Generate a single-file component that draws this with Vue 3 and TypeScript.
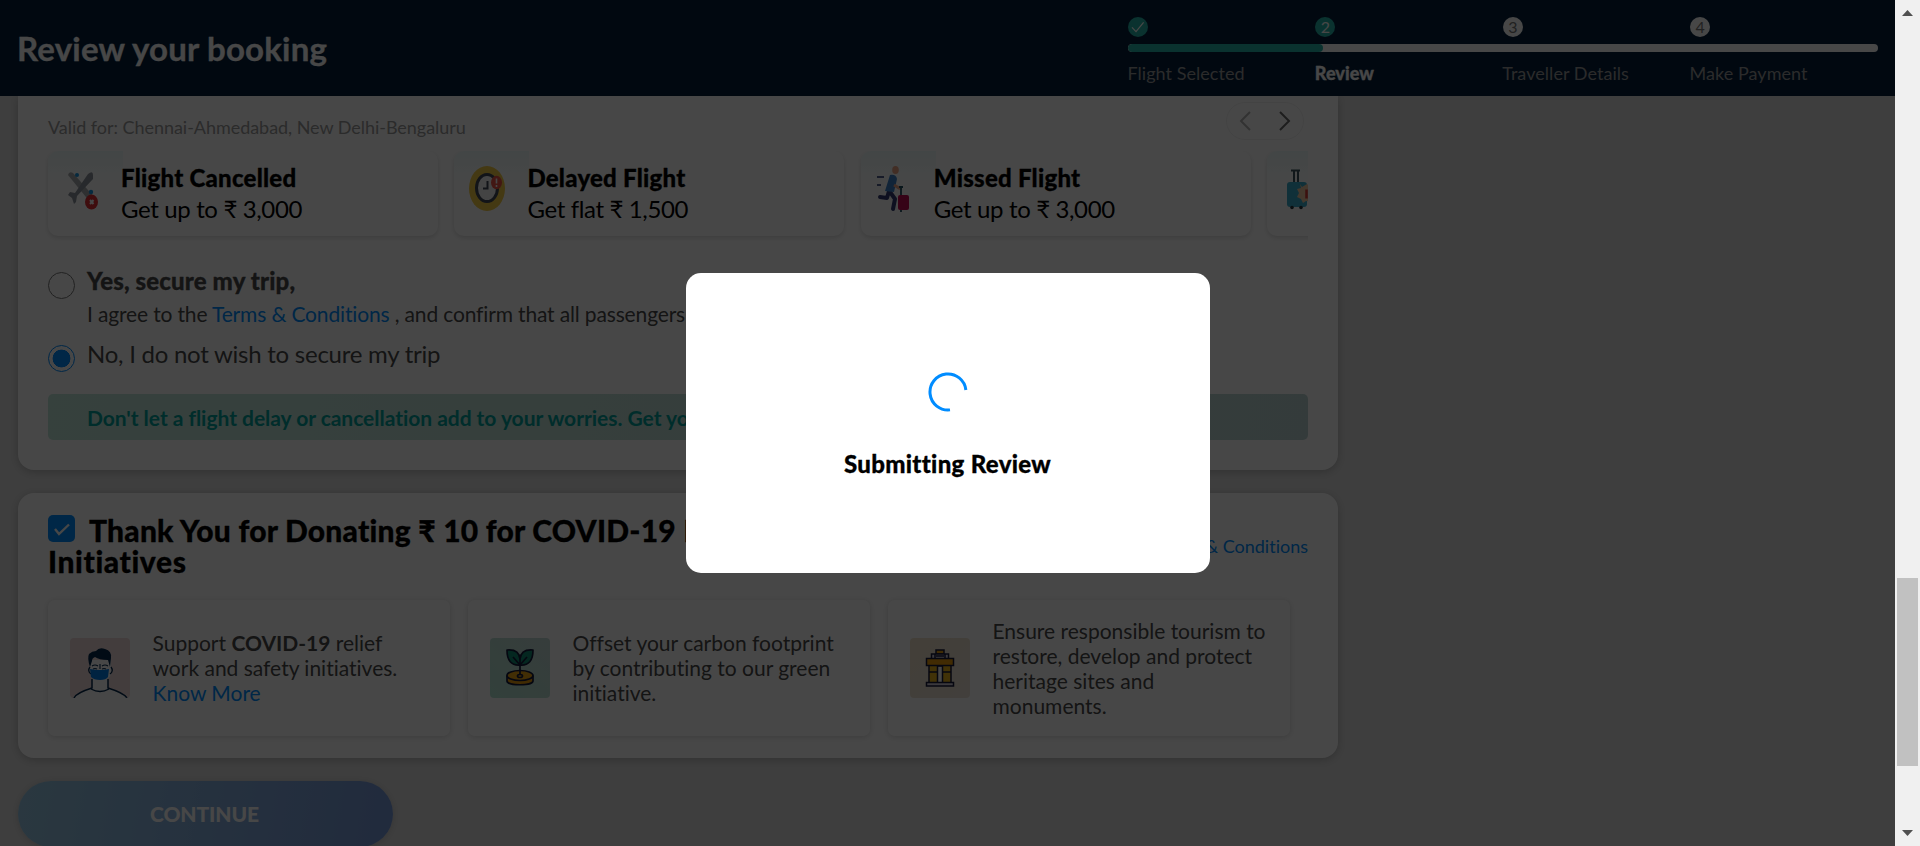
<script setup lang="ts">
interface Step { n: number; label: string; state: 'done' | 'active' | 'todo' }
interface Cover { kind: string; title: string; text: string }

const steps: Step[] = [
  { n: 1, label: 'Flight Selected', state: 'done' },
  { n: 2, label: 'Review', state: 'active' },
  { n: 3, label: 'Traveller Details', state: 'todo' },
  { n: 4, label: 'Make Payment', state: 'todo' },
]

const covers: Cover[] = [
  { kind: 'plane', title: 'Flight Cancelled', text: 'Get up to ₹ 3,000' },
  { kind: 'clock', title: 'Delayed Flight', text: 'Get flat ₹ 1,500' },
  { kind: 'runner', title: 'Missed Flight', text: 'Get up to ₹ 3,000' },
  { kind: 'bag', title: '', text: '' },
]
</script>

<template>
  <div class="screen">
    <div class="page">
      <header class="header">
        <h1>Review your booking</h1>
        <div class="stepper">
          <div class="row">
            <div v-for="s in steps" :key="s.n" class="cell">
              <span class="dot" :class="s.state">
                <svg v-if="s.state === 'done'" width="20" height="20" viewBox="0 0 20 20"><path d="M4 10.4 8 14.6 15.6 5.4" fill="none" stroke="#fff" stroke-width="1.2" /></svg>
                <template v-else>{{ s.n }}</template>
              </span>
            </div>
          </div>
          <div class="track"><div class="fill"></div></div>
          <div class="row labels">
            <div v-for="s in steps" :key="s.n" class="cell" :class="{ current: s.state === 'active' }">{{ s.label }}</div>
          </div>
        </div>
      </header>

      <main>
        <section class="card insurance">
          <div class="valid">
            <span>Valid for: Chennai-Ahmedabad, New Delhi-Bengaluru</span>
            <div class="nav">
              <svg width="12" height="20" viewBox="0 0 12 20"><path d="M11 1 2 10l9 9" fill="none" stroke="#b4b4b4" stroke-width="2" /></svg>
              <svg width="12" height="20" viewBox="0 0 12 20"><path d="M1 1l9 9-9 9" fill="none" stroke="#6a6a6a" stroke-width="2" /></svg>
            </div>
          </div>

          <div class="covers">
            <article v-for="c in covers" :key="c.kind" class="cover">
              <div class="art">
                <svg v-if="c.kind === 'plane'" width="75" height="75" viewBox="0 0 75 75">
                  <path d="M20 24q1-4 5-2l22 25-5 4z" fill="#a9adb0" />
                  <circle cx="29" cy="24" r="2" fill="#1696e0" /><circle cx="43" cy="41" r="2.2" fill="#1696e0" />
                  <path d="M40 23q5-4 5 1v4L29 45l-1 6-2 2-2-6-4-3 2-3 5 1z" fill="#8e959d" />
                  <ellipse cx="43.500" cy="51" rx="6.500" ry="7.500" fill="#e02f33" />
                  <path d="m42 49 3.500 4m0-4L42 53" stroke="#fff" stroke-width="2" />
                </svg>
                <svg v-else-if="c.kind === 'clock'" width="75" height="75" viewBox="0 0 75 75">
                  <ellipse cx="33" cy="37.500" rx="18" ry="22.500" fill="#f3cb45" />
                  <ellipse cx="33" cy="37" rx="10.500" ry="13.500" fill="#f4f4f4" stroke="#414956" stroke-width="3" />
                  <path d="M33.500 30v7.500H29" fill="none" stroke="#414956" stroke-width="2" />
                  <ellipse cx="42.500" cy="31.500" rx="5.500" ry="6.800" fill="#ee5546" />
                  <path d="M42.500 27.500v5m0 1.500v2" stroke="#fff" stroke-width="1.600" />
                </svg>
                <svg v-else-if="c.kind === 'runner'" width="75" height="75" viewBox="0 0 75 75">
                  <path d="M16 26h7m-7 8h4" stroke="#53608f" stroke-width="2" />
                  <path d="M28 40 26 47l-7-1M29 41l5 7-2 10" fill="none" stroke="#353c72" stroke-width="4" stroke-linecap="round" stroke-linejoin="round" />
                  <path d="M29 24q6-1 7 4l-3 13-9-1z" fill="#3d83c9" />
                  <path d="m33 34 5 3 3 .5" fill="none" stroke="#eba586" stroke-width="3" />
                  <ellipse cx="34.500" cy="19" rx="3.300" ry="4" fill="#eba586" />
                  <path d="M38 36h4M40 36v9M40 59v2" stroke="#235162" stroke-width="1.800" />
                  <rect x="37" y="44" width="11" height="15" rx="2" fill="#c30b55" />
                </svg>
                <svg v-else width="75" height="75" viewBox="0 0 75 75">
                  <path d="M24 19.500h9M27 19v13m4-13v13" stroke="#39545f" stroke-width="2" />
                  <rect x="20" y="31" width="20" height="25" rx="3" fill="#3badcb" />
                  <circle cx="25" cy="56.500" r="1.800" fill="#26343b" /><circle cx="34" cy="56.500" r="1.800" fill="#26343b" />
                  <path d="m33 33 2 3 5-3 5 4v14l-6-1-3 2-2-4-4-2 2-4-2-4 4-1z" fill="#f0c8a0" />
                  <path d="M39.500 38.500v9" stroke="#d63a36" stroke-width="2.500" />
                </svg>
              </div>
              <div v-if="c.title" class="cover-copy"><b>{{ c.title }}</b><span>{{ c.text }}</span></div>
            </article>
          </div>

          <div class="option yes">
            <i class="radio"></i>
            <div>
              <p class="strong">Yes, secure my trip,</p>
              <p class="small">I agree to the <a>Terms &amp; Conditions</a> , and confirm that all passengers</p>
            </div>
          </div>
          <div class="option">
            <i class="radio on"></i>
            <p class="decline">No, I do not wish to secure my trip</p>
          </div>
          <div class="notice">Don't let a flight delay or cancellation add to your worries. Get your</div>
        </section>

        <section class="card donate">
          <div class="donate-head">
            <h2><span class="check"><svg width="27" height="27" viewBox="0 0 27 27"><path d="m7 14 4 5 10-9.500" fill="none" stroke="#fff" stroke-width="2.400" /></svg></span>Thank You for Donating ₹ 10 for COVID-19 Relief &amp; <span class="wide">Initiatives</span></h2>
            <a>Terms &amp; Conditions</a>
          </div>
          <div class="causes">
            <article class="cause">
              <div class="pic pink">
                <svg width="60" height="60" viewBox="0 0 60 60">
                  <path d="M4 60q2-5 18-10V41h16v9q16 5 19 10z" fill="#fff" />
                  <path d="M4 60q2-5 18-10V41M38 41v9q16 5 19 10" fill="none" stroke="#04294d" stroke-width="1.500" />
                  <path d="M21 51q9 5 18 0" fill="none" stroke="#04294d" stroke-width="1.300" />
                  <path d="M20 22h21v14q-2 6-10 6t-11-6z" fill="#fff" />
                  <path d="M20 29q-3 4 1 7M41 29q3 4-1 7" fill="none" stroke="#04294d" stroke-width="1.300" />
                  <path d="M20 29q-3-9-1-13 3-3 7-3 3-4 9-2 7 2 6 9l-1 9-2-7q-9 0-13-3-3 1-3 4z" fill="#04294d" />
                  <path d="M22 28q3-2 6 0m4 0q3-2 6 0M23 31q2-1 4 0m5 0q2-1 4 0M30 26v5" fill="none" stroke="#04294d" stroke-width="1.100" />
                  <path d="M20 31q10 2 19 0l-1 8q-2 3-8 3t-9-3z" fill="#027de8" />
                </svg>
              </div>
              <p>Support <b>COVID-19</b> relief<br>work and safety initiatives.<br><a>Know More</a></p>
            </article>
            <article class="cause">
              <div class="pic green">
                <svg width="60" height="60" viewBox="0 0 60 60" stroke="#151b3c" stroke-width="1.700" stroke-linejoin="round">
                  <path d="M17 38v5c0 5 26 5 26 0v-5z" fill="#e89b0c" />
                  <ellipse cx="30" cy="37.500" rx="13" ry="5" fill="#eea615" />
                  <path d="M30 38V26" fill="none" />
                  <path d="M30 27Q17 28 17 12q12-1 13 9Q31 11 43 12q0 16-13 15z" fill="#108d72" />
                  <path d="m23 19 7 8 7-8M30 27v-6" fill="none" /><ellipse cx="30" cy="38" rx="2.500" ry="1.500" fill="#eea615" />
                </svg>
              </div>
              <p>Offset your carbon footprint<br>by contributing to our green<br>initiative.</p>
            </article>
            <article class="cause">
              <div class="pic sand">
                <svg width="60" height="60" viewBox="0 0 60 60" stroke="#171a3b" stroke-width="1.500">
                  <path d="M26 12h8v4h-8z" fill="#e59d12" /><path d="M21.500 16h17v5h-17z" fill="#d4cedb" />
                  <path d="M25 16v5m10-5v5M26 18h8" />
                  <path d="M19 27h22v18H19z" fill="#e9b419" /><path d="M19 34h22" />
                  <path d="M27.500 28h5v17h-5z" fill="#fff" /><path d="M16.500 20.500h27v7h-27z" fill="#e89b0c" />
                  <path d="M16.500 44.500h27v3.500h-27z" fill="#d4cedb" />
                </svg>
              </div>
              <p>Ensure responsible tourism to<br>restore, develop and protect<br>heritage sites and<br>monuments.</p>
            </article>
          </div>
        </section>
        <button class="continue">CONTINUE</button>
      </main>

      <div class="overlay">
        <div class="modal">
          <svg width="40" height="40" viewBox="0 0 40 40"><path d="M22 37.870A18 18 0 1 1 37.870 18" fill="none" stroke="#008cff" stroke-width="3" /></svg>
          <p>Submitting Review</p>
        </div>
      </div>
    </div>
    <div class="scrollbar">
      <svg width="11" height="6" viewBox="0 0 11 6"><path d="M0 6 5.500 0 11 6z" fill="#505050" /></svg>
      <div class="thumb"></div>
      <svg width="11" height="6" viewBox="0 0 11 6"><path d="M0 0 5.500 6 11 0z" fill="#505050" /></svg>
    </div>
  </div>
</template>

<style>
body { margin: 0; overflow: hidden; }
</style>

<style scoped>
* { box-sizing: border-box; }
h1, h2, p { margin: 0; }
svg { display: block; }
a { color: #008cff; }
.screen { display: flex; width: 1920px; height: 846px; font-family: Lato, "Noto Sans", sans-serif; font-variant-ligatures: none; color: #4a4a4a; }
.page { position: relative; flex: 1; height: 846px; overflow: hidden; background: #dedede; }
.header { display: flex; justify-content: space-between; height: 96px; padding: 0 17px 0 17px; background: #051f3c; }
h1 { font-size: 33px; line-height: 40px; padding-top: 28px; font-weight: 700; letter-spacing: .2px; color: #fff; -webkit-text-stroke: .3px; }
.stepper { width: 750px; padding-top: 17px; }
.row { display: grid; grid-template-columns: repeat(4, 187.4px); }
.dot { display: flex; align-items: center; justify-content: center; width: 20px; height: 20px; border-radius: 50%; font-size: 16px; line-height: 20px; color: #777; background: #fff; }
.dot.done, .dot.active { background: #26b5a9; color: #fff; }
.track { height: 8px; margin-top: 7px; border-radius: 4px; background: #fff; overflow: hidden; }
.fill { width: 195px; height: 8px; border-radius: 4px; background: #26b5a9; }
.labels { margin: 9px 0 0 -.6px; font-size: 18px; line-height: 24px; letter-spacing: .05px; color: #9b9b9b; }
.labels .current { font-weight: 900; color: #fff; -webkit-text-stroke: .3px; }

main { padding-left: 18px; }
.card { width: 1320px; padding: 0 30px; border-radius: 16px; background: #fff; box-shadow: 0 2px 8px rgba(0, 0, 0, .2); }
.insurance { height: 374px; border-top-left-radius: 0; border-top-right-radius: 0; }
.valid { display: flex; justify-content: space-between; height: 55px; font-size: 18px; line-height: 22px; letter-spacing: -.04px; color: #9b9b9b; }
.valid span { padding-top: 20px; }
.nav { display: flex; justify-content: space-between; align-items: center; width: 78px; height: 38px; margin: 6px 4px 0 0; padding: 0 12px; border: 1px solid #f1f1f1; border-radius: 19px; }
.covers { display: flex; gap: 16.4px; width: 1264px; height: 95px; margin-left: -4px; padding-left: 4px; overflow: hidden; }
.cover { display: flex; flex: 0 0 390px; height: 85px; border-radius: 10px; overflow: hidden; box-shadow: 0 2px 5px rgba(0, 0, 0, .14); }
.art { width: 75px; height: 75px; background: linear-gradient(#eefafa, #fff 45%); }
.cover-copy { display: flex; flex-direction: column; margin-left: -2px; padding-top: 11px; font-size: 24px; line-height: 31px; color: #000; }
.cover-copy b { font-weight: 900; letter-spacing: .25px; -webkit-text-stroke: .3px; }
.cover-copy span { letter-spacing: -.36px; }
.option { display: flex; gap: 12px; height: 73px; font-size: 24px; line-height: 29px; }
.option.yes { margin-top: 20px; }
.option + .option { height: 55px; }
.radio { flex: 0 0 27px; width: 27px; height: 27px; margin-top: 6px; border: 1px solid #777; border-radius: 50%; }
.radio.on { border-color: #008cff; background: radial-gradient(circle, #008cff 8.6px, transparent 9.2px); }
.strong { font-weight: 900; letter-spacing: .14px; -webkit-text-stroke: .3px; }
.small { margin-top: 4px; font-size: 21px; letter-spacing: -.15px; white-space: nowrap; }
.decline { letter-spacing: -.25px; }
.notice { height: 46px; padding-left: 39px; border-radius: 5px; font-size: 21px; line-height: 48px; font-weight: 700; letter-spacing: -.03px; color: #00a19c; background: linear-gradient(100deg, #c3e8db, #bcd5d2); }

.donate { height: 265px; margin-top: 23px; padding-top: 22px; }
.donate-head { display: flex; justify-content: space-between; align-items: center; height: 85px; }
h2 { width: 760px; height: 85px; font-size: 30px; line-height: 31px; font-weight: 900; letter-spacing: .22px; color: #000; -webkit-text-stroke: .3px; }
.wide { letter-spacing: .6px; }
.check { display: inline-block; width: 27px; height: 27px; margin-right: 14px; border-radius: 5px; background: #008cff; vertical-align: 0; }
.donate-head a { padding-bottom: 24px; font-size: 18px; }
.causes { display: flex; gap: 18px; }
.cause { display: flex; align-items: center; flex: 0 0 402px; height: 136px; padding-left: 22px; border-radius: 7px; box-shadow: 0 1px 6px rgba(0, 0, 0, .16); font-size: 21px; line-height: 25px; }
.cause p { margin-top: -1px; }
.pic { width: 60px; height: 60px; margin-right: 22.5px; border-radius: 4px; overflow: hidden; }
.pink { background: #f0dada; }
.green { background: linear-gradient(45deg, #b4e5d4, #c3d9d6); }
.sand { background: linear-gradient(135deg, #f0e2ca, #ebe3d8); }
.continue { display: block; width: 375px; height: 66px; margin-top: 23px; padding: 0 2px 0 0; border: 0; border-radius: 33px; font: 900 21px/62px Lato, sans-serif; letter-spacing: -.1px; color: #fff; background: linear-gradient(100deg, #97c8e4, #7698da); box-shadow: 0 1px 7px rgba(0, 0, 0, .15); }
.overlay { position: absolute; inset: 0; display: flex; align-items: center; justify-content: center; background: rgba(0, 0, 0, .72); }
.modal { display: flex; flex-direction: column; align-items: center; width: 524px; height: 300px; padding-top: 99px; border-radius: 15px; background: #fff; }
.modal p { margin-top: 37px; font-size: 24px; line-height: 30px; font-weight: 900; letter-spacing: .32px; color: #000; -webkit-text-stroke: .3px; }
.scrollbar { display: flex; flex-direction: column; align-items: center; width: 25px; height: 846px; padding: 10px 0; background: #f0f0f0; }
.scrollbar svg { flex: none; }
.thumb { flex: none; width: 21px; height: 188px; margin: 562px 0 64px; background: #c1c1c1; }
</style>
